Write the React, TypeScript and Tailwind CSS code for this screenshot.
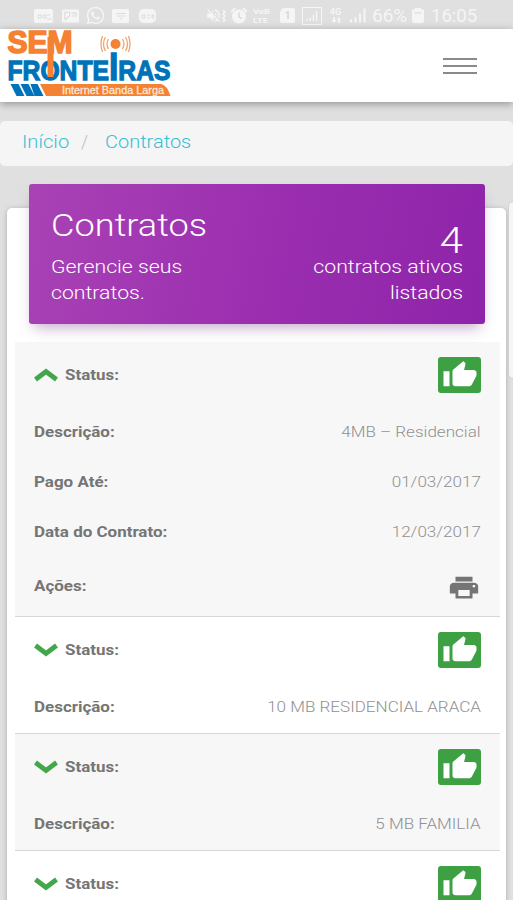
import type { ReactNode } from 'react';
import { MdPrint, MdThumbUp, MdVolumeOff, MdWhatsapp } from 'react-icons/md';

type Field = { label: string; value: string };

type Contract = {
  id: number;
  open: boolean;
  fields: Field[];
};

const contracts: Contract[] = [
  {
    id: 1,
    open: true,
    fields: [
      { label: 'Descrição:', value: '4MB – Residencial' },
      { label: 'Pago Até:', value: '01/03/2017' },
      { label: 'Data do Contrato:', value: '12/03/2017' },
    ],
  },
  { id: 2, open: false, fields: [{ label: 'Descrição:', value: '10 MB RESIDENCIAL ARACA' }] },
  { id: 3, open: false, fields: [{ label: 'Descrição:', value: '5 MB FAMILIA' }] },
  { id: 4, open: false, fields: [] },
];

function Signal({ className }: { className: string }) {
  return (
    <svg viewBox="0 0 16 14" className={className} fill="currentColor">
      <path d="M0 11h2v3H0zM4.500 9h2v5h-2zM9 5h2v9H9zM13.500 0h2v14h-2z" />
    </svg>
  );
}

function StatusBar() {
  return (
    <div className="flex h-[29px] shrink-0 items-center bg-[#e0e0e0] pt-[2px] pl-[34px] text-[#f5f5f5]">
      <svg viewBox="0 0 20 16" className="h-4 w-5">
        <rect x="0" y="1" width="19" height="14" rx="2" fill="currentColor" />
        <path d="M4 10V7h3v3zM9 10V7h3v3zM13 7h3M13 11h5" fill="none" stroke="#dcdcdc" />
      </svg>
      <svg viewBox="0 0 18 14" className="ml-[8px] h-[14px] w-[17px]">
        <rect width="18" height="14" rx="1.500" fill="currentColor" />
        <path d="M3 11V3h5v4l-5 4M10 4h5v3h-5" fill="none" stroke="#dcdcdc" strokeWidth="1.200" />
      </svg>
      <MdWhatsapp className="ml-[6px] h-[21px] w-[21px]" />
      <svg viewBox="0 0 18 14" className="ml-[6px] h-[14px] w-[18px]">
        <rect width="17" height="14" rx="1.500" fill="currentColor" />
        <path d="M4 4.500h10M5 7h8M8 9.500h2" fill="none" stroke="#dcdcdc" />
      </svg>
      <svg viewBox="0 0 18 14" className="ml-[9px] h-[14px] w-[18px]">
        <rect width="17" height="14" rx="5" fill="currentColor" />
        <path d="M3 6h3v3H3zM8 6h3M8 9h3M13 6h2v3h-2z" fill="none" stroke="#dcdcdc" />
      </svg>
      <MdVolumeOff className="ml-[48px] h-[19px] w-[17px]" />
      <svg viewBox="0 0 5 14" className="h-[14px] w-[5px]" fill="none" stroke="currentColor" strokeWidth="1.500">
        <path d="M1 1l2 2-2 2 2 2-2 2 2 2-2 2" />
      </svg>
      <svg viewBox="0 0 16 16" className="ml-[4px] h-4 w-4">
        <circle cx="8" cy="8.500" r="7" fill="currentColor" />
        <path d="M0 4l4-4M12 0l4 4" stroke="currentColor" strokeWidth="2" />
        <path d="M8 4.500V9l3 1.500" fill="none" stroke="#d5d5d5" strokeWidth="1.300" />
      </svg>
      <div className="ml-[6px] flex w-[18px] flex-col font-['Roboto'] text-[8px] leading-[9px] font-bold">
        <span className="w-[15px] origin-left scale-x-[1.15]">VoB</span>
        <span className="w-[15px] origin-left scale-x-[1.15]">LTE</span>
      </div>
      <div className="ml-[9px] flex h-[15px] w-[15px] items-center justify-center rounded-[2px] rounded-tl-[5px] bg-[#f5f5f5] font-['Roboto'] text-[10px] font-bold text-[#d5d5d5]">
        1
      </div>
      <div className="ml-[7px] flex h-[18px] w-[20px] items-center justify-center border border-[#f5f5f5]">
        <Signal className="h-[10px] w-[12px]" />
      </div>
      <div className="ml-[6px] flex w-[15px] flex-col items-center font-['Roboto'] text-[9px] leading-[9px] font-bold">
        <span>4G</span>
        <svg viewBox="0 0 10 6" className="h-[6px] w-[10px]" fill="currentColor">
          <path d="M2 0h2v3h1.500L3 6 .5 3H2zM7 6h2V3h1L8 0 5.500 3H7z" />
        </svg>
      </div>
      <Signal className="ml-[7px] h-[15px] w-[16px]" />
      <div className="ml-[6px] w-[36px] font-['Roboto'] text-[19px] leading-5 whitespace-nowrap">66%</div>
      <svg viewBox="0 0 12 15" className="ml-[4px] h-[15px] w-[12px]">
        <path d="M3 1.500V0h6v1.500h3V13a2 2 0 0 1-2 2H2a2 2 0 0 1-2-2V1.500z" fill="currentColor" />
        <path d="M2.500 5h7" stroke="#d5d5d5" />
      </svg>
      <span className="ml-[7px] font-['Roboto'] text-[18.500px] leading-5">16:05</span>
    </div>
  );
}

function Logo() {
  return (
    <svg
      viewBox="0 0 174 72"
      className="h-[72px] w-[174px]"
      fontFamily="'Liberation Sans', sans-serif"
      fontWeight="bold"
      role="img"
      aria-label="Sem Fronteiras Internet Banda Larga"
    >
      <text
        x="7.500"
        y="50.500"
        fontSize="28.500"
        textLength="163"
        lengthAdjust="spacingAndGlyphs"
        fill="#0072b9"
        stroke="#0072b9"
        strokeWidth="1.300"
      >
        FRONTE<tspan fontSize="39">I</tspan>RAS
      </text>
      <rect x="47.500" y="8" width="6" height="40" fill="#f58232" />
      <text
        x="7.500"
        y="24"
        fontSize="32"
        textLength="65"
        lengthAdjust="spacingAndGlyphs"
        fill="#f58232"
        stroke="#f58232"
        strokeWidth="1.700"
      >
        SEM
      </text>
      <circle cx="115.500" cy="15" r="5" fill="#f58232" />
      <g fill="none" stroke="#f5a26d" strokeWidth="1.300">
        <path d="M108.500 10q-3 5 0 10M105.500 8q-4 7 0 14M102.500 7q-3 8 0 16" />
        <path d="M122.500 10q3 5 0 10M125.500 8q4 7 0 14M128.500 7q3 8 0 16" />
      </g>
      <g fill="#0072b9">
        <path d="M10.500 55h8l6 12h-8z" />
        <path d="M20.500 55h8l6 12h-8z" />
        <path d="M30.500 55h7l6 12h-9z" />
      </g>
      <path d="M40 55h121q6 1 9.500 12H46z" fill="#f58232" />
      <text
        x="62"
        y="64.500"
        fontSize="10.500"
        textLength="102"
        lengthAdjust="spacingAndGlyphs"
        fill="#fde6d6"
        fontWeight="normal"
        stroke="#fde6d6"
        strokeWidth="0.300"
      >
        Internet Banda Larga
      </text>
    </svg>
  );
}

function Header() {
  return (
    <header className="relative z-10 flex h-[73px] shrink-0 justify-between bg-white pr-9 shadow-[0_2px_8px_rgba(0,0,0,0.35)]">
      <Logo />
      <button className="flex w-[34px] flex-col justify-center gap-[5px]" aria-label="Menu">
        <span className="h-[2px] bg-[#8a8a8a]" />
        <span className="h-[2px] bg-[#8a8a8a]" />
        <span className="h-[2px] bg-[#8a8a8a]" />
      </button>
    </header>
  );
}

function Chevron({ open }: { open: boolean }) {
  return (
    <svg viewBox="0 0 24 14" className="mr-[7px] mb-[3px] h-[14px] w-6" fill="none" stroke="#43a64b" strokeWidth="4.800">
      <path d={open ? 'M1.500 11.500L12 3.500l10.500 8' : 'M1.500 2.500L12 10.500l10.500-8'} />
    </svg>
  );
}

function Label({ children }: { children: ReactNode }) {
  return (
    <span className="inline-block origin-left scale-x-[1.17] text-[14.5px] font-bold whitespace-nowrap text-[#757575]">
      {children}
    </span>
  );
}

function Value({ children }: { children: ReactNode }) {
  return (
    <span className="inline-block origin-right scale-x-[1.175] text-[14.5px] font-light whitespace-nowrap text-[#909090]">
      {children}
    </span>
  );
}

function ContractRow({ contract }: { contract: Contract }) {
  return (
    <li className="border-b border-[#d8d8d8] pr-[19px] pl-[18.5px] odd:bg-[#f7f7f7]">
      <div className="flex h-[66px] items-center justify-between">
        <div className="flex items-center pt-[2px]">
          <Chevron open={contract.open} />
          <Label>Status:</Label>
        </div>
        <div className="flex h-9 w-[43px] items-center justify-center rounded-[3px] bg-[#3da143]">
          <MdThumbUp className="h-[30px] w-9 text-white" preserveAspectRatio="none" />
        </div>
      </div>
      {contract.fields.map((field) => (
        <div key={field.label} className="flex h-[50px] items-center justify-between">
          <Label>{field.label}</Label>
          <Value>{field.value}</Value>
        </div>
      ))}
      {contract.open && (
        <div className="flex h-[58px] items-center justify-between">
          <Label>Ações:</Label>
          <MdPrint className="h-[29px] w-[34px] text-[#757575]" preserveAspectRatio="none" />
        </div>
      )}
    </li>
  );
}

export default function App() {
  return (
    <div className="flex h-[900px] w-[513px] flex-col overflow-hidden bg-[#e0e0e0] font-['Roboto',sans-serif]">
      <StatusBar />
      <Header />
      <nav className="mt-[19px] flex h-[45px] shrink-0 items-center rounded-[5px] bg-[#f5f5f5] pb-[4px] pl-[22px] text-[18px] font-light text-[#36bfd2]">
        <span className="w-[47px]">
          <span className="inline-block origin-left scale-x-[1.12]">Início</span>
        </span>
        <span className="w-[36px] pl-[12px] text-[#bdbdbd]">/</span>
        <span className="inline-block origin-left scale-x-[1.11]">Contratos</span>
      </nav>

      <div className="flex min-h-0 flex-1 items-start pl-[7px]">
        <main className="mt-[42px] w-[499px] shrink-0 rounded-[5px] bg-white pr-[6px] pl-2 shadow-[0_1px_5px_rgba(0,0,0,0.25)]">
          <section className="relative -mt-6 mr-[15px] ml-[14px] flex h-[140px] justify-between rounded-[3px] bg-linear-[100deg,#a942b5_0%,#9c2fb0_50%,#8e24aa_100%] px-[22px] font-light text-white shadow-[0_8px_14px_-5px_rgba(100,30,120,0.4)]">
            <div className="w-[150px] pt-[21px]">
              <h1 className="origin-left scale-x-[1.13] text-[32px] leading-10">Contratos</h1>
              <p className="mt-[9px] w-[130px] origin-left scale-x-[1.18] text-[18px] leading-[26px]">
                Gerencie seus contratos.
              </p>
            </div>
            <div className="w-[160px] pt-[37px] text-right">
              <div className="origin-right scale-x-[1.13] text-[37px] leading-[40px]">4</div>
              <p className="-mt-[7px] origin-right scale-x-[1.18] text-[18px] leading-[26px]">
                contratos ativos
                <br />
                listados
              </p>
            </div>
          </section>
          <ul className="mt-[18px]">
            {contracts.map((contract) => (
              <ContractRow key={contract.id} contract={contract} />
            ))}
          </ul>
        </main>
        <aside className="mt-[35px] ml-[2px] h-[178px] w-5 shrink-0 rounded-[5px] border border-[#d0d0d0] bg-[#f5f5f5]" />
      </div>
    </div>
  );
}
